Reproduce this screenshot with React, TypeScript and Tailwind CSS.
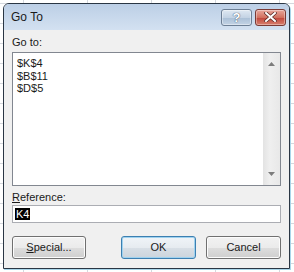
import React from "react";

const font = { fontFamily: '"Liberation Sans", Arial, sans-serif' };

function CaptionButton({ kind }: { kind: "help" | "close" }) {
  const isClose = kind === "close";
  return (
    <div
      className={
        isClose
          ? "flex h-[17px] w-[31px] items-center justify-center rounded-[3px] border border-[#7a3a35] bg-[linear-gradient(#e8a79c,#d2705f_50%,#c0453a_51%,#d7806f)] shadow-[inset_0_0_0_1px_rgba(255,255,255,0.35)]"
          : "flex h-[17px] w-[31px] items-center justify-center rounded-[3px] border border-[#6d7f95] bg-[linear-gradient(#dfe8f2,#c4d3e4_50%,#aabfd6_51%,#c3d3e5)] shadow-[inset_0_0_0_1px_rgba(255,255,255,0.4)]"
      }
    >
      {isClose ? (
        <svg width="13" height="10" viewBox="0 0 13 10">
          <path d="M2 1 L11 9 M11 1 L2 9" stroke="#5a2a25" strokeWidth="3.4" strokeLinecap="square" />
          <path d="M2 1 L11 9 M11 1 L2 9" stroke="#ffffff" strokeWidth="2" strokeLinecap="square" />
        </svg>
      ) : (
        <span className="text-[13px] font-bold leading-none text-white [text-shadow:0_0_1px_#44546a,0_0_1px_#44546a]">?</span>
      )}
    </div>
  );
}

function Button({ label, hotkey, isDefault }: { label: string; hotkey?: number; isDefault?: boolean }) {
  return (
    <div
      className={
        isDefault
          ? "flex h-[23px] w-[75px] items-center justify-center rounded-[3px] border border-[#3c7fb1] bg-[linear-gradient(#f0f4f8,#e6ebf0_50%,#d8dfe6_51%,#ccd4dc)] shadow-[inset_0_0_0_1px_#9fd2ef] text-[11px] text-[#1a1a1a]"
          : "flex h-[23px] w-[75px] items-center justify-center rounded-[3px] border border-[#707070] bg-[linear-gradient(#f2f2f2,#ebebeb_50%,#dddddd_51%,#cfcfcf)] shadow-[inset_0_0_0_1px_#fcfcfc] text-[11px] text-[#1a1a1a]"
      }
    >
      {hotkey !== undefined ? (
        <span>
          <span className="underline underline-offset-1">{label.slice(0, hotkey + 1)}</span>
          {label.slice(hotkey + 1)}
        </span>
      ) : (
        label
      )}
    </div>
  );
}

export default function App() {
  const refs = ["$K$4", "$B$11", "$D$5"];
  return (
    <div
      className="h-[272px] w-[294px] bg-white bg-[linear-gradient(#d4d8de_1px,transparent_1px),linear-gradient(90deg,#d4d8de_1px,transparent_1px)] bg-[size:64px_20px] bg-[position:23px_3px] pl-[3px] pt-[3px]"
      style={font}
    >
      <div className="flex h-[266px] w-[287px] flex-col overflow-hidden rounded-t-[6px] border border-[#2a3644] bg-[#f0f0f0] shadow-[1px_1px_0_#a9d6ea]">
        <div className="flex h-[26px] shrink-0 items-center justify-between bg-[linear-gradient(#bccfe6,#d3e1f1)] pl-[7px] pr-[3px]">
          <span className="text-[12px] text-[#1a1a1a]">Go To</span>
          <div className="flex gap-[3px]">
            <CaptionButton kind="help" />
            <CaptionButton kind="close" />
          </div>
        </div>
        <div className="flex flex-1 flex-col px-[8px] pt-[6px] text-[#1a1a1a]">
          <div className="text-[11px] leading-[13px]">Go to:</div>
          <div className="mt-[3px] flex h-[134px] border border-[#828790] bg-white">
            <div className="flex-1 pl-[4px] pt-[4px] text-[11px] leading-[12.5px]">
              {refs.map((r) => (
                <div key={r}>{r}</div>
              ))}
            </div>
            <div className="flex w-[17px] flex-col items-center justify-between bg-[linear-gradient(90deg,#e3e3e3,#efefef_40%,#e8e8e8)] py-[9px]">
              <svg width="7" height="4" viewBox="0 0 7 4">
                <path d="M0 4 L3.5 0 L7 4 Z" fill="#7c7c7c" />
              </svg>
              <svg width="7" height="4" viewBox="0 0 7 4">
                <path d="M0 0 L7 0 L3.5 4 Z" fill="#7c7c7c" />
              </svg>
            </div>
          </div>
          <div className="mt-[5px] text-[11px] leading-[13px]">
            <span className="underline underline-offset-1">R</span>eference:
          </div>
          <div className="mt-[1px] flex h-[18px] items-center border border-[#abadb3] bg-white pl-[2px]">
            <span className="bg-black px-[1px] text-[11px] leading-[12px] text-white">K4</span>
          </div>
          <div className="mt-[13px] flex items-center">
            <Button label="Special..." hotkey={0} />
            <div className="ml-[35px]">
              <Button label="OK" isDefault />
            </div>
            <div className="ml-[10px]">
              <Button label="Cancel" />
            </div>
          </div>
        </div>
      </div>
    </div>
  );
}
